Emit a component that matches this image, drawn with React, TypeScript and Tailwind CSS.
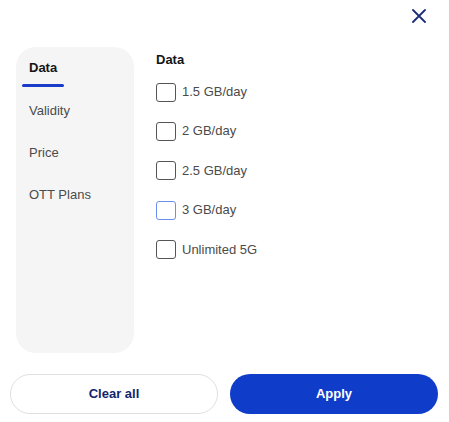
import React, { useState } from 'react';

const tabs = ['Data', 'Validity', 'Price', 'OTT Plans'];
const dataOptions = ['1.5 GB/day', '2 GB/day', '2.5 GB/day', '3 GB/day', 'Unlimited 5G'];

export default function App() {
  const [active] = useState('Data');
  const [checked, setChecked] = useState<string[]>([]);

  const toggle = (opt: string) =>
    setChecked((prev) => (prev.includes(opt) ? prev.filter((o) => o !== opt) : [...prev, opt]));

  return (
    <div className="w-[449px] h-[422px] bg-white font-['Liberation_Sans',Arial,sans-serif]">
      <div className="h-[47px] flex justify-end items-start pt-[9px] pr-[23px]">
        <button className="w-[14px] h-[14px] text-[#1b2d78]">
          <svg viewBox="0 0 14 14" width="14" height="14" fill="none" stroke="currentColor" strokeWidth="1.8" strokeLinecap="round">
            <path d="M1 1l12 12M13 1L1 13" />
          </svg>
        </button>
      </div>

      <div className="flex px-4">
        <div className="w-[118px] h-[306px] bg-[#f5f5f5] rounded-[20px] flex flex-col pt-[13px]">
          {tabs.map((t, i) => (
            <div key={t} className={i === 0 ? '' : i === 1 ? 'mt-[16px]' : 'mt-[26px]'}>
              <div
                className={`pl-[13px] text-[13px] leading-[16px] ${
                  t === active ? 'font-bold text-[#141414]' : 'text-[#4b4b4b]'
                }`}
              >
                {t}
              </div>
              {t === active && <div className="ml-[6px] mt-[8px] w-[42px] h-[3px] rounded-full bg-[#1a3cc8]" />}
            </div>
          ))}
        </div>

        <div className="ml-[22px] pt-[5px] flex flex-col">
          <div className="text-[13px] leading-[16px] font-bold text-[#141414]">Data</div>
          <div className="mt-[14px] flex flex-col gap-[19.4px]">
            {dataOptions.map((opt, i) => (
              <label key={opt} className="h-[20px] flex items-center gap-[6px] cursor-pointer" onClick={() => toggle(opt)}>
                <span
                  className={`w-[20px] h-[19px] rounded-[3px] border bg-white ${
                    i === 3 ? 'border-[#6b8ef0]' : 'border-[#555555]'
                  }`}
                />
                <span className="text-[13px] leading-[16px] text-[#4b4b4b]">{opt}</span>
              </label>
            ))}
          </div>
        </div>
      </div>

      <div className="mt-[21px] px-[10px] flex gap-[12px]">
        <button
          className="w-[208px] h-[40px] rounded-full border border-[#e0e0e0] bg-white text-[13px] font-bold text-[#14246b]"
          onClick={() => setChecked([])}
        >
          Clear all
        </button>
        <button className="w-[208px] h-[40px] rounded-full bg-[#0f3cc9] text-[13px] font-bold text-white">Apply</button>
      </div>
    </div>
  );
}
